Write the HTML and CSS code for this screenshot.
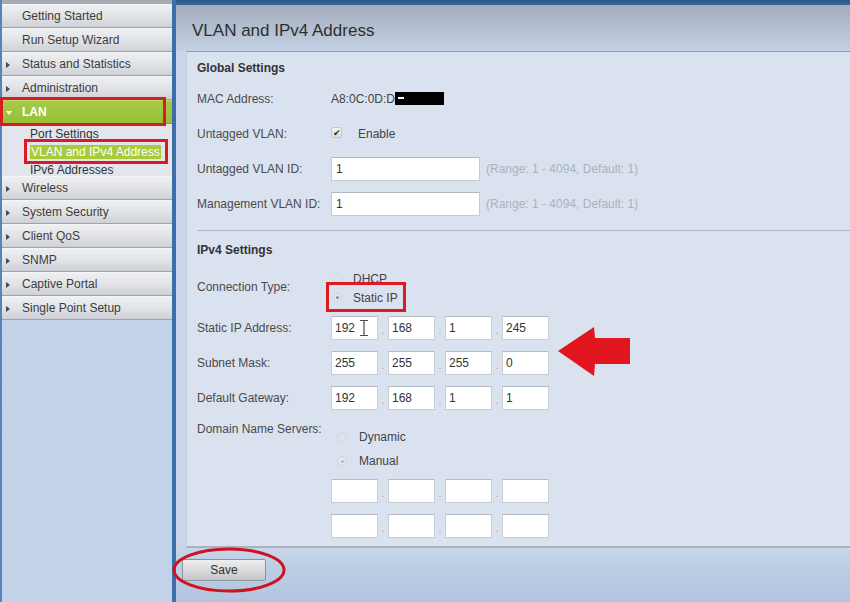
FILE: index.html
```html
<!DOCTYPE html>
<html lang="en">
<head>
    <meta charset="UTF-8">
    <meta name="viewport" content="width=device-width, initial-scale=1.0">
    <title>VLAN and IPv4 Address</title>
    <link rel="stylesheet" href="styles.css">
</head>
<body>
    <div class="page">
        <nav class="sidebar">
            <a class="nav-item">Getting Started</a>
            <a class="nav-item">Run Setup Wizard</a>
            <a class="nav-item closed">Status and Statistics</a>
            <a class="nav-item closed">Administration</a>
            <a class="nav-item open">LAN</a>
            <div class="submenu">
                <a>Port Settings</a>
                <a class="current">VLAN and IPv4 Address</a>
                <a>IPv6 Addresses</a>
            </div>
            <a class="nav-item closed">Wireless</a>
            <a class="nav-item closed">System Security</a>
            <a class="nav-item closed">Client QoS</a>
            <a class="nav-item closed">SNMP</a>
            <a class="nav-item closed">Captive Portal</a>
            <a class="nav-item closed">Single Point Setup</a>
        </nav>

        <main class="main">
            <header class="header">
                <h1>VLAN and IPv4 Address</h1>
            </header>
            <div class="content">
                <form class="panel">
                    <section class="group first">
                        <h2>Global Settings</h2>
                        <div class="row">
                            <label>MAC Address:</label>
                            <span class="value">A8:0C:0D:D<span class="redact"><i></i></span></span>
                        </div>
                        <div class="row">
                            <label>Untagged VLAN:</label>
                            <span class="check">&#10004;</span>
                            <span class="check-text">Enable</span>
                        </div>
                        <div class="row">
                            <label for="vlan-id">Untagged VLAN ID:</label>
                            <input class="text" id="vlan-id" type="text" value="1">
                            <span class="hint">(Range: 1 - 4094, Default: 1)</span>
                        </div>
                        <div class="row">
                            <label for="mgmt-id">Management VLAN ID:</label>
                            <input class="text" id="mgmt-id" type="text" value="1">
                            <span class="hint">(Range: 1 - 4094, Default: 1)</span>
                        </div>
                    </section>

                    <section class="group second">
                        <h2>IPv4 Settings</h2>
                        <div class="row conn">
                            <label>Connection Type:</label>
                            <div class="radios">
                                <div class="radio-line"><span class="radio faint"></span>DHCP</div>
                                <div class="radio-line"><span class="radio on"></span>Static IP</div>
                            </div>
                        </div>
                        <div class="row">
                            <label>Static IP Address:</label>
                            <div class="ip">
                                <input class="octet" value="192"><span class="dot">.</span>
                                <input class="octet" value="168"><span class="dot">.</span>
                                <input class="octet" value="1"><span class="dot">.</span>
                                <input class="octet" value="245">
                            </div>
                        </div>
                        <div class="row">
                            <label>Subnet Mask:</label>
                            <div class="ip">
                                <input class="octet" value="255"><span class="dot">.</span>
                                <input class="octet" value="255"><span class="dot">.</span>
                                <input class="octet" value="255"><span class="dot">.</span>
                                <input class="octet" value="0">
                            </div>
                        </div>
                        <div class="row">
                            <label>Default Gateway:</label>
                            <div class="ip">
                                <input class="octet" value="192"><span class="dot">.</span>
                                <input class="octet" value="168"><span class="dot">.</span>
                                <input class="octet" value="1"><span class="dot">.</span>
                                <input class="octet" value="1">
                            </div>
                        </div>
                        <div class="row dns">
                            <label>Domain Name Servers:</label>
                            <div class="dns-fields">
                                <div class="dns-line"><span class="radio faint"></span>Dynamic</div>
                                <div class="dns-line"><span class="radio on light"></span>Manual</div>
                                <div class="ip">
                                    <input class="octet"><span class="dot">.</span>
                                    <input class="octet"><span class="dot">.</span>
                                    <input class="octet"><span class="dot">.</span>
                                    <input class="octet">
                                </div>
                                <div class="ip">
                                    <input class="octet"><span class="dot">.</span>
                                    <input class="octet"><span class="dot">.</span>
                                    <input class="octet"><span class="dot">.</span>
                                    <input class="octet">
                                </div>
                            </div>
                        </div>
                    </section>
                </form>
            </div>
            <footer class="footer">
                <button type="button" class="save">Save</button>
            </footer>
        </main>
    </div>

    <!-- red markup drawn over the screenshot -->
    <div class="mark box-lan"></div>
    <div class="mark box-vlan"></div>
    <div class="mark box-static"></div>
    <svg class="arrow" width="80" height="56" viewBox="0 0 80 56">
        <polygon points="1,25 37,1 38,12 73,12 73,38 38,38 37,50" fill="#e1161f"/>
    </svg>
    <svg class="ellipse" width="116" height="48" viewBox="0 0 116 48">
        <ellipse cx="58" cy="24" rx="55" ry="21" fill="none" stroke="#d0121c" stroke-width="3"/>
    </svg>
    <svg class="ibeam" width="10" height="18" viewBox="0 0 10 18">
        <path d="M1 1.5h8M1 16.5h8M5 1.5v15" fill="none" stroke="#4a4a4a" stroke-width="1.2"/>
    </svg>
</body>
</html>
```

FILE: styles.css
```css
*{
    box-sizing: border-box;
}

html, body{
    margin: 0;
    height: 100%;
    overflow: hidden;
}

body{
    font-family: "Liberation Sans", Arial, sans-serif;
    font-size: 12px;
    color: #4a4a4a;
    position: relative;
}

.page{
    display: flex;
    height: 602px;
}

/* left menu */
.sidebar{
    width: 176px;
    flex-shrink: 0;
    padding-top: 4px;
    border-left: 2px solid #5583ba;
    border-right: 4px solid #3e6ea7;
    background: linear-gradient(#a6abb3 0, #a6abb3 4px, #c4d4ea 4px, #c2d2e9 100%);
}

.nav-item{
    display: block;
    height: 24px;
    line-height: 23px;
    padding-left: 20px;
    color: #3c3c3c;
    border-top: 1px solid #f4f5f7;
    border-bottom: 1px solid #97a2b2;
    background: linear-gradient(#eeeff1, #e0e2e6 55%, #cdd0d6);
    position: relative;
}

.nav-item.closed::before{
    content: "";
    position: absolute;
    left: 4px;
    top: 9px;
    border-left: 4px solid #3d4a5c;
    border-top: 3px solid transparent;
    border-bottom: 3px solid transparent;
}

.nav-item.open{
    color: #fff;
    font-weight: bold;
    background: linear-gradient(#a6cc48, #96bf35);
    border-top-color: #b8d86a;
    border-bottom-color: #7ea22c;
}

.nav-item.open::before{
    content: "";
    position: absolute;
    left: 4px;
    top: 10px;
    border-top: 4px solid #fff;
    border-left: 3px solid transparent;
    border-right: 3px solid transparent;
}

.submenu{
    height: 52px;
    background: #e2e6ec;
    padding: 1px 0 0 28px;
}

.submenu a{
    display: block;
    height: 18px;
    line-height: 18px;
    color: #333;
}

.submenu a.current{
    width: fit-content;
    height: 14px;
    line-height: 14px;
    margin: 2px 0;
    padding: 0 1px;
    color: #fff;
    background: #a7cb3b;
}

/* right side */
.main{
    flex: 1;
    display: flex;
    flex-direction: column;
}

.header{
    height: 51px;
    padding: 21px 0 0 16px;
    background: linear-gradient(#2b5a8b 0, #3a6794 5px, #a2acbc 5px, #c4d1e4 100%);
}

.header h1{
    margin: 0;
    font-size: 17px;
    line-height: 20px;
    font-weight: normal;
    color: #2e2e2e;
}

.content{
    padding-left: 10px;
    background: #c9d5e8;
}

.panel{
    border-top: 1px solid #8f9cb1;
    border-left: 1px solid #c3ccd9;
    border-bottom: 2px solid #a7b1c0;
    background: #dae2f0;
    padding-left: 10px;
}

.group h2{
    margin: 0;
    font-size: 12px;
    font-weight: bold;
    color: #333;
}

.group.first{
    padding-bottom: 9px;
    border-bottom: 1px solid #aeb8c7;
}

.group.first h2{
    height: 29px;
    padding-top: 9px;
}

.group.second{
    padding-bottom: 3px;
}

.group.second h2{
    height: 38px;
    padding-top: 12px;
}

.row{
    display: flex;
    align-items: center;
    height: 35px;
}

.row label{
    width: 134px;
    flex-shrink: 0;
}

.value{
    display: flex;
    align-items: center;
    color: #444;
}

.redact{
    width: 49px;
    height: 13px;
    background: #000;
    padding: 5px 0 0 3px;
}

.redact i{
    display: block;
    width: 6px;
    height: 2px;
    background: #fff;
}

.check{
    width: 11px;
    height: 11px;
    margin-top: -2px;
    border: 1px solid #c2c7ce;
    border-radius: 2px;
    background: linear-gradient(#f2f3f5, #dcdfe4);
    color: #333;
    font-size: 9px;
    line-height: 10px;
    text-align: center;
}

.check-text{
    margin-left: 16px;
    color: #444;
}

.text{
    width: 149px;
    height: 24px;
    border: 1px solid #c5cad1;
    border-top-color: #b0b6be;
    background: #fff;
    padding: 0 4px;
    font: 12px "Liberation Sans", Arial, sans-serif;
    color: #333;
}

.hint{
    margin-left: 6px;
    color: #abb2bd;
}

.row.conn{
    height: 41px;
    align-items: flex-start;
}

.row.conn label{
    padding-top: 11px;
}

.radio-line{
    display: flex;
    align-items: center;
    height: 19px;
    color: #444;
}

.radio{
    width: 9px;
    height: 9px;
    margin: 0 11px 0 2px;
    border-radius: 50%;
    border: 1px solid #cdd3db;
    background: #e3e8ef;
    display: flex;
    align-items: center;
    justify-content: center;
}

.radio.faint{
    border-color: #d3d9e2;
    background: #dde4ef;
}

.radio.on::after{
    content: "";
    width: 3px;
    height: 3px;
    border-radius: 50%;
    background: #8a8f98;
}

.radio.light::after{
    background: #b6bcc6;
}

.ip{
    display: flex;
    align-items: center;
}

.octet{
    width: 47px;
    height: 24px;
    border: 1px solid #c9ced5;
    border-top-color: #b5bbc3;
    background: #fff;
    padding: 0 3px;
    font: 12px "Liberation Sans", Arial, sans-serif;
    color: #333;
}

.dot{
    width: 10px;
    padding-top: 6px;
    text-align: center;
    font-size: 10px;
    color: #9aa1ab;
}

.row.dns{
    height: auto;
    align-items: flex-start;
}

.row.dns label{
    padding-top: 7px;
}

.dns-fields{
    padding-top: 10px;
}

.dns-line{
    display: flex;
    align-items: center;
    height: 24px;
    color: #444;
}

.dns-line .radio{
    width: 10px;
    height: 10px;
    margin: 0 12px 0 6px;
}

.dns-fields .ip{
    height: 35px;
}

.footer{
    flex: 1;
    padding: 11px 0 0 6px;
    background: linear-gradient(#c9d5ea, #bcd0e5 30%, #b3c4de);
}

.save{
    width: 84px;
    height: 22px;
    border: 1px solid #8d939b;
    border-radius: 2px;
    background: linear-gradient(#eeeeee, #d6d7d9 60%, #c3c5c8);
    font: 12px "Liberation Sans", Arial, sans-serif;
    color: #333;
}

/* annotations */
.mark{
    position: absolute;
    border: 3px solid #dd1a22;
}

.box-lan{
    left: 0;
    top: 97px;
    width: 166px;
    height: 29px;
}

.box-vlan{
    left: 24px;
    top: 139px;
    width: 144px;
    height: 25px;
}

.box-static{
    left: 326px;
    top: 282px;
    width: 80px;
    height: 30px;
}

.arrow{
    position: absolute;
    left: 557px;
    top: 326px;
}

.ellipse{
    position: absolute;
    left: 171px;
    top: 546px;
}

.ibeam{
    position: absolute;
    left: 359px;
    top: 319px;
}
```
